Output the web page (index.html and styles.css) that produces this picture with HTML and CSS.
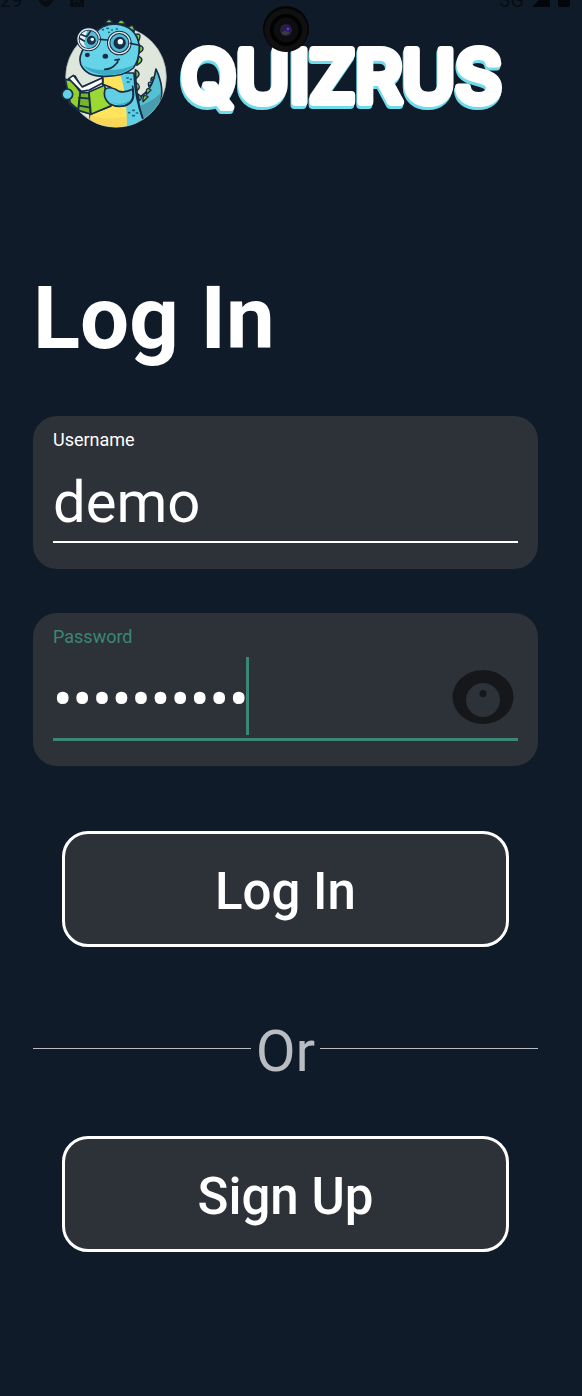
FILE: index.html
```
<!DOCTYPE html>
<html lang="en">
<head>
<meta charset="utf-8">
<meta name="viewport" content="width=device-width, initial-scale=1">
<title>Quizrus – Log In</title>
<link rel="stylesheet" href="styles.css">
</head>
<body>
<div class="status">
  <div class="status-group">
    <span>29</span>
    <svg class="shield" width="16" height="18" viewBox="0 0 16 18"><path d="M8 0 16 3V9Q15 15 8 18 1 15 0 9V3Z" fill="#080d13"/><path d="M6 13V8H9V11H7" fill="none" stroke="#0f1b28"/></svg>
    <svg width="14" height="16" viewBox="0 0 14 16"><path d="M0 0H14V16H0Z" fill="#080d13"/><path d="M4 8V12M4 10H9M9 8V12M4 14H5M7 14H8M10 14H11" stroke="#0f1b28"/></svg>
  </div>
  <div class="status-group">
    <span>3G</span>
    <svg width="18" height="18" viewBox="0 0 18 18"><path d="M18 0V18H0Z" fill="#03070b"/></svg>
    <svg width="12" height="18" viewBox="0 0 12 18"><rect width="12" height="18" rx="2" fill="#03070b"/></svg>
  </div>
</div>
<svg class="camera" width="46" height="46" viewBox="0 0 46 46" aria-hidden="true">
  <circle cx="23" cy="23" r="23" fill="#050506"/>
  <circle cx="23" cy="24" r="21.500" fill="#101010"/>
  <circle cx="23" cy="24" r="16" fill="#020203"/>
  <circle cx="23" cy="24" r="12.500" fill="#0e0e10"/>
  <circle cx="23" cy="24" r="6" fill="#252238"/>
  <path d="M18 27Q22 31 27 27L23 24Z" fill="#3c3948"/>
  <circle cx="24.500" cy="22.500" r="3" fill="#30146e"/>
  <circle cx="25" cy="23" r="1.200" fill="#6342c8"/>
</svg>
<header class="brand">
  <svg class="mascot" viewBox="30 50 330 340" role="img" aria-label="Dinosaur reading a book">
    <defs><clipPath id="disc"><circle cx="198" cy="232" r="150"/></clipPath></defs>
    <circle cx="198" cy="232" r="151" fill="#dfe6dc" stroke="#a9b2b5" stroke-width="2"/>
    <g stroke="#172c45" stroke-width="5" stroke-linejoin="round" stroke-linecap="round">
      <g clip-path="url(#disc)">
        <path d="M318 208Q345 265 330 310 310 350 270 370L250 300Q306 285 318 208Z" fill="#55bfd4"/>
        <path d="M333 280Q300 310 265 320L275 365Q325 345 333 280Z" fill="#489eae" stroke="none"/>
        <path d="M160 220H252Q255 300 280 360L260 385H120V340Z" fill="#5fd0e6"/>
        <path d="M160 228H212Q230 280 231 385H110L125 340Q180 330 185 310L165 270Z" fill="#ffe45c" stroke="none"/>
        <path d="M120 345Q170 365 230 350V385H115Z" fill="#f5cf57" stroke="none" opacity=".6"/>
      </g>
      <g fill="#8ac832" stroke-width="4">
        <path d="M166 70Q177 50 188 69Z"/><path d="M202 72Q214 50 226 73Z"/><path d="M234 84Q252 68 253 95Z"/><path d="M257 104Q277 98 266 125Z"/><path d="M269 136Q290 146 268 160Z"/><path d="M266 170Q288 180 260 197Z"/><path d="M256 210Q278 223 257 237Z"/><path d="M257 247Q277 261 261 273Z"/><path d="M264 283Q282 294 268 303Z"/><path d="M279 306Q277 280 294 291Z"/><path d="M290 284Q286 258 303 271Z"/><path d="M296 260Q291 242 307 250Z"/><path d="M303 244Q301 229 313 234Z"/>
      </g>
      <path d="M104 142Q84 170 92 194 109 232 168 230 222 230 250 205 268 183 268 140 260 78 195 73 151 75 136 102Z" fill="#65d4e9"/>
      <path d="M99 197Q120 225 168 226 227 226 253 195 218 212 171 211 126 213 99 197Z" fill="#3cabc6" stroke="none"/>
      <path d="M50 242 75 229 94 263 158 235V254L182 263V320L124 342 112 340 80 330 57 311Z" fill="#fff"/>
      <path d="M46 239 66 243 91 277 84 330 61 310Z" fill="#91ce30"/>
      <path d="M91 278 117 279 121 343 85 332Z" fill="#75b62a"/>
      <path d="M117 277 163 257 183 318 123 344Z" fill="#9bd832"/>
      <path d="M56 237 70 227 97 262 158 234V250L118 271 94 275Z" fill="#fff"/>
      <path d="M87 294 118 297M87 318 121 324" fill="none"/>
      <path d="M165 269Q180 257 207 275 226 280 247 269 259 307 225 318 201 324 178 312 157 294 165 269Z" fill="#61cee3"/>
      <path d="M248 260Q258 306 225 318" fill="none"/>
      <path d="M183 305Q212 322 240 302 220 329 183 305Z" fill="#37a7c3" stroke="none"/>
      <circle cx="52" cy="284" r="16" fill="#62d2e8"/>
      <path d="M204 182Q204 190 196 195 184 209 164 209M195 181 208 179" fill="none"/>
      <ellipse cx="112" cy="166" rx="5" ry="4" fill="#172c45"/><ellipse cx="166" cy="170" rx="6" ry="5" fill="#172c45"/>
      <ellipse cx="116" cy="119" rx="33" ry="32" fill="#e9f0f1"/>
      <path d="M112 92Q151 89 148 121 144 149 114 148 96 134 105 117Z" fill="#54bcd3" stroke="none"/>
      <circle cx="124" cy="122" r="11" fill="#1e4056"/><circle cx="127" cy="119" r="5" fill="#fff" stroke="none"/>
      <path d="M91 104 110 111 124 91M87 115 103 124" fill="none"/>
      <circle cx="208" cy="130" r="33" fill="#50bad1"/>
      <circle cx="209" cy="130" r="16" fill="#17344f"/><circle cx="211" cy="126" r="8" fill="#fff" stroke="none"/>
      <g fill="none"><circle cx="208" cy="130" r="32" stroke-width="10"/><circle cx="208" cy="130" r="32" stroke="#dbe9eb" stroke-width="4"/><ellipse cx="116" cy="119" rx="32" ry="31" stroke-width="9"/><ellipse cx="116" cy="119" rx="32" ry="31" stroke="#dbe9eb" stroke-width="4"/><path d="M150 119 174 121M241 131 265 136"/></g>
      <path d="M158 90H160M171 86H175M185 91H187M199 88H202M176 98H178M230 235H235M241 239H244M232 247H237M248 332H253M259 340H263M248 348H253M236 339H239" fill="none" stroke="#1b6884"/>
      <path d="M256 215Q259 300 277 354" fill="none"/>
    </g>
  </svg>
  <svg class="wordmark" width="340" height="76" viewBox="0 0 340 76">
    <text x="5" y="63">QUIZRUS</text>
  </svg>
</header>
<main class="page">
  <h1 class="title">Log In</h1>
  <form class="form">
    <div class="field">
      <label class="label" for="user">Username</label>
      <input class="input" id="user" type="text" value="demo">
    </div>
    <div class="field field-active">
      <label class="label" for="pass">Password</label>
      <input class="input" id="pass" type="password" value="quizrus123">
      <span class="caret"></span>
      <button class="reveal" type="button" aria-label="Show password">
        <svg width="62" height="56" viewBox="0 0 62 56"><ellipse cx="31" cy="28" rx="30.500" ry="27" fill="#15171b"/><circle cx="31" cy="31" r="17" fill="#2d3138"/><circle cx="31" cy="24.500" r="3.500" fill="#15171b"/></svg>
      </button>
    </div>
    <button class="button" type="button">Log In</button>
    <div class="divider"><span>Or</span></div>
    <button class="button" type="button">Sign Up</button>
  </form>
</main>
</body>
</html>
```
FILE: styles.css
```
* { box-sizing: border-box; }
body {
  margin: 0;
  min-height: 100vh;
  background: #0f1b28;
  color: #fff;
  font-family: Roboto, sans-serif;
  position: relative;
}
.status {
  position: absolute;
  top: 0;
  left: 0;
  right: 0;
  height: 7px;
  padding-right: 12px;
  overflow: hidden;
  display: flex;
  justify-content: space-between;
  align-items: flex-end;
  color: #080d13;
  font-size: 20px;
  line-height: 14px;
}
.status-group { display: flex; align-items: flex-end; gap: 8px; }
.status-group .shield { margin: 0 8px; }
.camera { position: absolute; top: 6px; left: calc(50% - 28px); z-index: 1; }
.brand {
  display: flex;
  align-items: center;
  padding: 16px 60px 0;
  height: 130px;
}
.mascot { width: 110px; height: 114px; flex: none; }
.wordmark {
  flex: none;
  margin-left: 6px;
  margin-top: 8px;
  overflow: visible;
  font-family: Inter, sans-serif;
  font-size: 72px;
  font-weight: 500;
  fill: #fff;
  stroke: #fff;
  stroke-width: 8px;
  stroke-linejoin: round;
  filter: drop-shadow(-1px 3px 0 #6fdced);
}
.page { padding: 136px 44px 80px 33px; }
.title { margin: 0 0 46px; font-size: 87px; line-height: 104px; font-weight: 700; }
.form { display: flex; flex-direction: column; }
.field {
  position: relative;
  display: flex;
  flex-direction: column;
  height: 153px;
  margin-bottom: 44px;
  padding: 14px 20px 0;
  border-radius: 24px;
  background: #2d3138;
}
.label { font-size: 18px; line-height: 20px; }
.input {
  width: 100%;
  height: 93px;
  padding: 12px 0 0;
  border: 0;
  border-bottom: 2px solid #fff;
  border-radius: 0;
  outline: 0;
  background: none;
  color: #fff;
  font: 400 58px Roboto, sans-serif;
}
.field-active { margin-bottom: 65px; }
.field-active .label { color: #3b8676; }
.field-active .input { height: 94px; border-bottom: 3px solid #3b8676; }
.caret {
  position: absolute;
  left: 213px;
  top: 44px;
  width: 3px;
  height: 78px;
  background: #3b8676;
}
.reveal {
  position: absolute;
  right: 24px;
  top: 56px;
  padding: 0;
  border: 0;
  background: none;
  line-height: 0;
}
.button {
  height: 116px;
  margin: 0 29px;
  padding: 4px 0 0;
  border: 3px solid #fff;
  border-radius: 26px;
  background: #2d3138;
  color: #fff;
  font: 500 51px Roboto, sans-serif;
}
.divider {
  display: flex;
  align-items: center;
  gap: 5px;
  margin: 69px 0 50px;
  color: #b9bdc1;
  font-size: 58px;
  line-height: 70px;
}
.divider::before, .divider::after {
  content: "";
  flex: 1;
  height: 1px;
  margin-bottom: 6px;
  background: #b9bdc1;
}
```
